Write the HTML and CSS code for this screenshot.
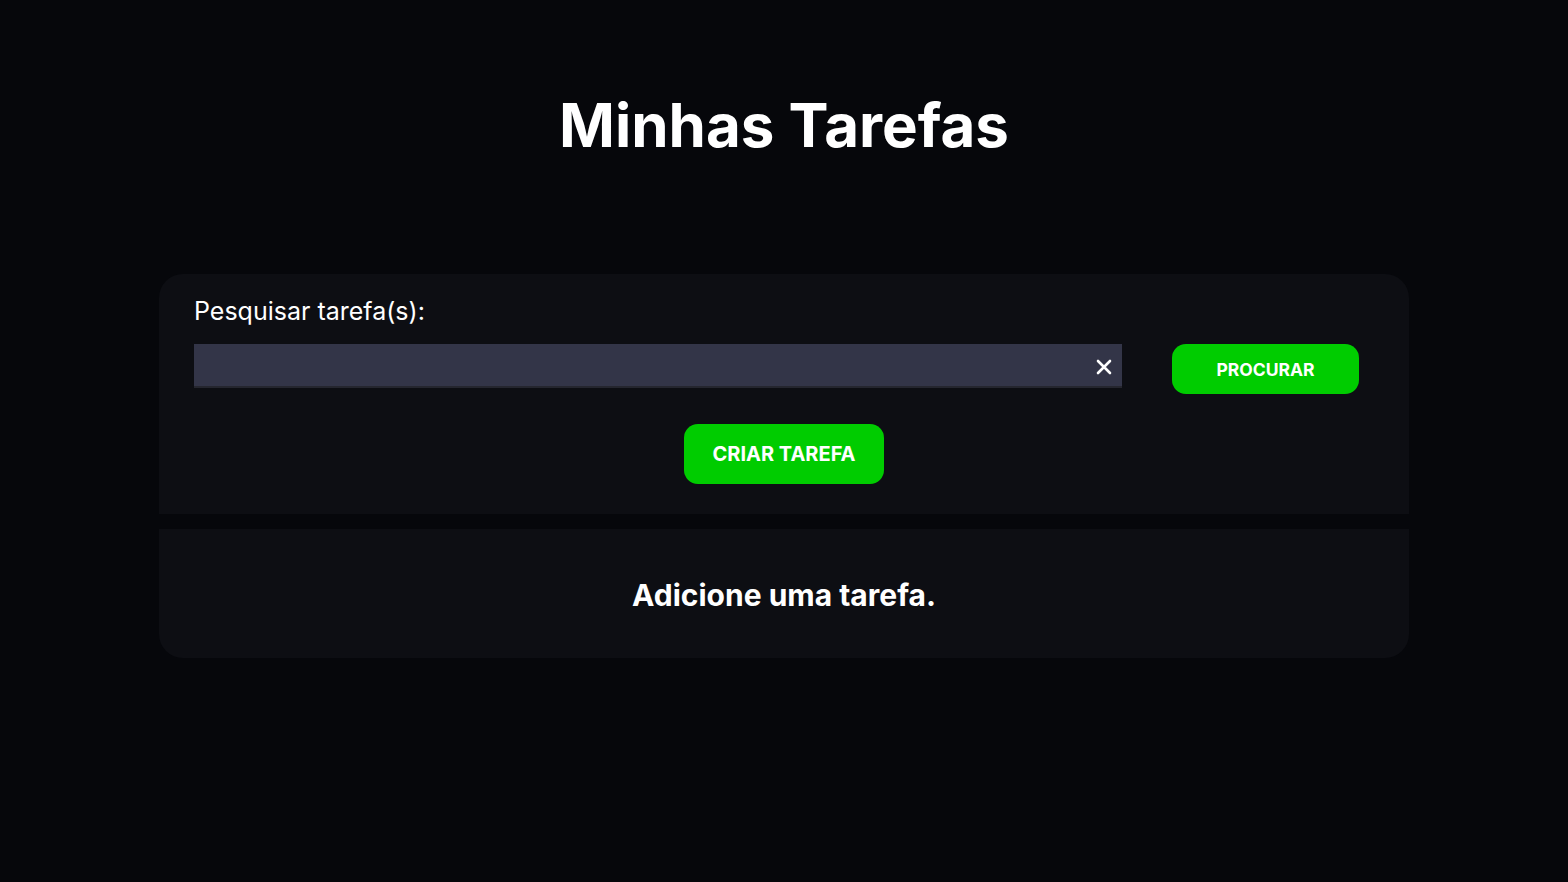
FILE: index.html
```html
<!DOCTYPE html>
<html lang="pt-BR">
<head>
<meta charset="utf-8">
<title>Minhas Tarefas</title>
<link rel="stylesheet" href="styles.css">
</head>
<body>
<header class="header">
  <h1 class="title">Minhas Tarefas</h1>
</header>
<main class="board">
  <section class="panel panel-top">
    <label class="label" for="busca">Pesquisar tarefa(s):</label>
    <div class="search-row">
      <div class="input-wrap">
        <input class="input" id="busca" type="text">
        <button class="clear" type="button" aria-label="Limpar">
          <svg width="16" height="16" viewBox="0 0 16 16"><path d="M2 2 L14 14 M14 2 L2 14" stroke="#ffffff" stroke-width="2.6" stroke-linecap="round" fill="none"/></svg>
        </button>
      </div>
      <button class="btn btn-search" type="button">PROCURAR</button>
    </div>
    <div class="create-row">
      <button class="btn btn-create" type="button">CRIAR TAREFA</button>
    </div>
  </section>
  <section class="panel panel-bottom">
    <p class="empty">Adicione uma tarefa.</p>
  </section>
</main>
</body>
</html>
```
FILE: styles.css
```css
* { box-sizing: border-box; }
html, body { margin: 0; padding: 0; }
body {
  background: #06070b;
  color: #ffffff;
  font-family: Inter, "Noto Sans", sans-serif;
  min-height: 882px;
}
.header {
  padding-top: 86px;
  text-align: center;
}
.title {
  margin: 0;
  font-size: 60px;
  font-weight: 700;
  line-height: 78px;
}
.board {
  width: 1250px;
  margin: 110px auto 0;
  display: flex;
  flex-direction: column;
  gap: 15px;
}
.panel {
  background: #0d0e13;
}
.panel-top {
  border-radius: 24px 24px 0 0;
  padding: 22px 50px 30px 35px;
}
.panel-bottom {
  border-radius: 0 0 24px 24px;
  height: 129px;
  display: flex;
  align-items: center;
  justify-content: center;
}
.label {
  display: block;
  font-size: 25px;
  line-height: 31px;
  font-weight: 400;
  margin-bottom: 17px;
}
.search-row {
  display: flex;
  align-items: flex-start;
  gap: 50px;
}
.input-wrap {
  position: relative;
  flex: 1;
}
.input {
  display: block;
  width: 100%;
  height: 44px;
  background: #333548;
  border: none;
  border-bottom: 2px solid #25262f;
  color: #ffffff;
  font-family: inherit;
  font-size: 18px;
  padding: 0 44px 0 12px;
  outline: none;
}
.clear {
  position: absolute;
  right: 10px;
  top: 15px;
  width: 16px;
  height: 16px;
  padding: 0;
  border: none;
  background: none;
  display: flex;
}
.btn {
  border: none;
  background: #00cc00;
  color: #ffffff;
  font-family: inherit;
  font-weight: 700;
  border-radius: 14px;
  cursor: pointer;
}
.btn-search {
  width: 187px;
  height: 50px;
  font-size: 17.5px;
  padding-top: 2px;
}
.create-row {
  display: flex;
  justify-content: center;
  margin-top: 30px;
  padding-left: 15px;
}
.btn-create {
  width: 200px;
  height: 60px;
  font-size: 20px;
}
.empty {
  margin: 0;
  font-size: 30px;
  font-weight: 700;
  padding-top: 2px;
}
```
